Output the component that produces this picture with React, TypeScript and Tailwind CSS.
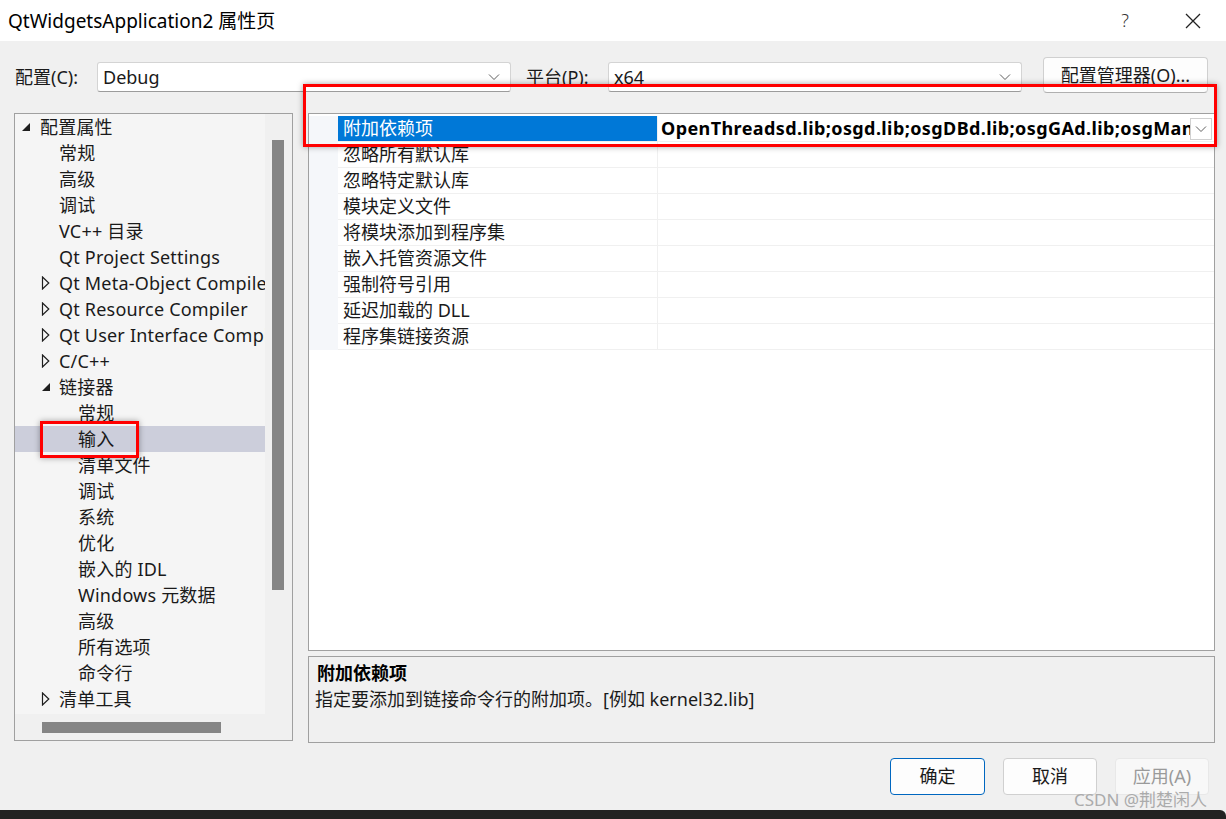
import React from 'react'

type TreeItem = { label: string; level: number; arrow?: 'open' | 'closed'; selected?: boolean }

const tree: TreeItem[] = [
  { label: '配置属性', level: 0, arrow: 'open' },
  { label: '常规', level: 1 },
  { label: '高级', level: 1 },
  { label: '调试', level: 1 },
  { label: 'VC++ 目录', level: 1 },
  { label: 'Qt Project Settings', level: 1 },
  { label: 'Qt Meta-Object Compiler', level: 1, arrow: 'closed' },
  { label: 'Qt Resource Compiler', level: 1, arrow: 'closed' },
  { label: 'Qt User Interface Compiler', level: 1, arrow: 'closed' },
  { label: 'C/C++', level: 1, arrow: 'closed' },
  { label: '链接器', level: 1, arrow: 'open' },
  { label: '常规', level: 2 },
  { label: '输入', level: 2, selected: true },
  { label: '清单文件', level: 2 },
  { label: '调试', level: 2 },
  { label: '系统', level: 2 },
  { label: '优化', level: 2 },
  { label: '嵌入的 IDL', level: 2 },
  { label: 'Windows 元数据', level: 2 },
  { label: '高级', level: 2 },
  { label: '所有选项', level: 2 },
  { label: '命令行', level: 2 },
  { label: '清单工具', level: 1, arrow: 'closed' },
]

const props = [
  '附加依赖项',
  '忽略所有默认库',
  '忽略特定默认库',
  '模块定义文件',
  '将模块添加到程序集',
  '嵌入托管资源文件',
  '强制符号引用',
  '延迟加载的 DLL',
  '程序集链接资源',
]

function Chevron({ className = '' }: { className?: string }) {
  return (
    <svg width="12" height="8" viewBox="0 0 12 8" className={className}>
      <polyline points="1,1.5 6,6.5 11,1.5" fill="none" stroke="#5f5f5f" strokeWidth="1" />
    </svg>
  )
}

function Arrow({ kind }: { kind: 'open' | 'closed' }) {
  if (kind === 'open') {
    return (
      <svg width="10" height="10" viewBox="0 0 10 10">
        <polygon points="9,1 9,9 1,9" fill="#1e1e1e" />
      </svg>
    )
  }
  return (
    <svg width="9" height="14" viewBox="0 0 9 14">
      <polygon points="1.5,1 7.8,7 1.5,13" fill="none" stroke="#1e1e1e" strokeWidth="1.2" />
    </svg>
  )
}

function Combo({ value, className = '' }: { value: string; className?: string }) {
  return (
    <div className={`flex h-[30px] items-center justify-between rounded-[3px] border border-[#d4d4d4] border-b-[#9c9c9c] bg-white pl-[5px] pr-[10px] ${className}`}>
      <span className="text-[18px] leading-[28px] text-[#1a1a1a]">{value}</span>
      <Chevron />
    </div>
  )
}

export default function App() {
  return (
    <div className="relative flex h-[819px] w-[1226px] flex-col overflow-hidden bg-[#f0f0f0] font-['Noto_Sans','Noto_Sans_CJK_SC',sans-serif] text-[#1a1a1a]">
      {/* title bar */}
      <div className="flex h-[41px] shrink-0 items-center bg-white pl-[8px]">
        <span className="text-[19px] leading-[24px] text-black">QtWidgetsApplication2 属性页</span>
        <div className="ml-auto flex items-center">
          <span className="mr-[56px] text-[18px] font-light text-[#333]">?</span>
          <svg width="16" height="16" viewBox="0 0 16 16" className="mr-[25px]">
            <path d="M1 1 L15 15 M15 1 L1 15" stroke="#222" strokeWidth="1.3" />
          </svg>
        </div>
      </div>

      {/* body */}
      <div className="flex h-[769px] shrink-0 flex-col px-[14px] pt-[16px]">
        {/* config row */}
        <div className="flex h-[36px] items-center pt-[4px]">
          <span className="ml-[1px] w-[82px] text-[18px]">配置(C):</span>
          <Combo value="Debug" className="w-[414px]" />
          <span className="ml-[15px] w-[82px] text-[18px]">平台(P):</span>
          <Combo value="x64" className="w-[414px]" />
          <button className="-mt-[4px] ml-[21px] h-[36px] w-[165px] rounded-[4px] border border-[#d0d0d0] border-b-[#b0b0b0] bg-[#fdfdfd] text-[18px] text-[#1a1a1a]">
            配置管理器(O)...
          </button>
        </div>

        {/* main area */}
        <div className="mt-[20px] flex h-[630px] gap-[15px]">
          {/* tree */}
          <div className="flex h-[628px] w-[279px] flex-col border border-[#a0a0a0] bg-[#f0f0f0]">
            <div className="flex h-[600px]">
              <div className="w-[250px] overflow-hidden bg-[#f5f5f5]">
                {tree.map((t, i) => (
                  <div
                    key={i}
                    className={`relative flex h-[26px] items-center whitespace-nowrap ${t.selected ? 'bg-[#cccedb]' : ''}`}
                    style={{ paddingLeft: 25 + t.level * 19 }}
                  >
                    <span className="absolute flex items-center" style={{ left: 6 + t.level * 20 }}>
                      {t.arrow && <Arrow kind={t.arrow} />}
                    </span>
                    <span className="text-[18px] leading-[26px] tracking-[0.2px]">{t.label}</span>
                  </div>
                ))}
              </div>
              <div className="w-[27px] pl-[7px] pt-[26px]">
                <div className="h-[450px] w-[12px] bg-[#858585]" />
              </div>
            </div>
            <div className="flex h-[26px] items-center pl-[27px]">
              <div className="h-[11px] w-[179px] bg-[#858585]" />
            </div>
          </div>

          {/* right side */}
          <div className="flex w-[907px] flex-col gap-[5px]">
            <div className="h-[538px] border border-[#a0a0a0] bg-white pt-[2px]">
              {props.map((p, i) => (
                <div key={i} className="flex h-[26px]">
                  <div className="w-[29px] bg-[#f5f7fa]" />
                  <div
                    className={`w-[319px] border-b border-[#f0f0f0] pl-[5px] text-[18px] leading-[25px] ${i === 0 ? 'border-[#0078d7] bg-[#0078d7] text-white' : ''}`}
                  >
                    {p}
                  </div>
                  <div className="w-px bg-[#f0f0f0]" />
                  <div className="flex flex-1 items-center overflow-hidden border-b border-[#f0f0f0] pl-[3px] pr-[2px]">
                    {i === 0 && (
                      <>
                        <span className="flex-1 overflow-hidden whitespace-nowrap text-[18px] font-bold leading-[25px] tracking-[0.4px] text-black">
                          OpenThreadsd.lib;osgd.lib;osgDBd.lib;osgGAd.lib;osgManipulatord.lib;osgViewerd.lib
                        </span>
                        <div className="flex h-[22px] w-[22px] shrink-0 items-center justify-center border border-[#d0d0d0] bg-white">
                          <Chevron />
                        </div>
                      </>
                    )}
                  </div>
                </div>
              ))}
            </div>
            <div className="h-[87px] border border-[#a0a0a0] bg-[#f0f0f0] pl-[8px] pt-[3px]">
              <div className="text-[18px] font-bold leading-[26px] text-black">附加依赖项</div>
              <div className="-ml-[2px] text-[18px] leading-[26px] text-[#1a1a1a]">指定要添加到链接命令行的附加项。[例如 kernel32.lib]</div>
            </div>
          </div>
        </div>

        {/* buttons */}
        <div className="mt-[15px] flex h-[37px] justify-end gap-[18px] pr-[3px]">
          <button className="w-[95px] rounded-[4px] border border-[#0067c0] bg-[#fdfdfd] text-[18px] text-[#1a1a1a]">确定</button>
          <button className="w-[94px] rounded-[4px] border border-[#d0d0d0] bg-[#fdfdfd] text-[18px] text-[#1a1a1a]">取消</button>
          <button className="w-[94px] rounded-[4px] border border-[#e8e8e8] bg-[#f8f8f8] text-[18px] text-[#9a9a9a]">应用(A)</button>
        </div>
      </div>

      <div className="h-[9px] shrink-0 rounded-tr-[6px] bg-[#222222]" />

      {/* annotations */}
      <div className="absolute left-[303px] top-[84px] h-[63px] w-[914px] border-[3px] border-[#ff0000] shadow-[0_0_6px_rgba(0,0,0,0.35)]" />
      <div className="absolute left-[40px] top-[421px] h-[37px] w-[99px] border-[3px] border-[#ff0000] shadow-[0_0_6px_rgba(0,0,0,0.35)]" />
      <div className="absolute left-[1074px] top-[789px] text-[17px] leading-[22px] text-[#ababab]">CSDN @荆楚闲人</div>
    </div>
  )
}
